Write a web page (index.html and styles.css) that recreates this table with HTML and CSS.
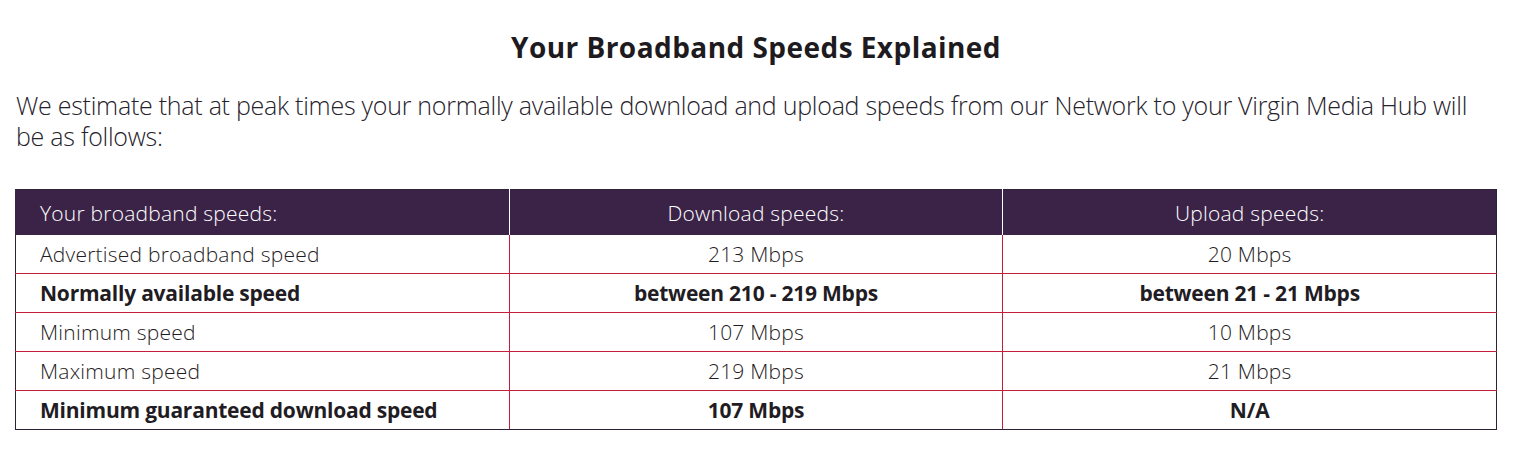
FILE: index.html
```html
<!DOCTYPE html>
<html lang="en">
<head>
<meta charset="utf-8">
<title>Your Broadband Speeds Explained</title>
<link rel="stylesheet" href="styles.css">
</head>
<body>
<main class="page">
  <h2 class="title">Your Broadband Speeds Explained</h2>
  <p class="intro">We estimate that at peak times your normally available download and upload speeds from our Network to your Virgin Media Hub will be as follows:</p>
  <table class="speeds">
    <thead>
      <tr>
        <th class="label">Your broadband speeds:</th>
        <th>Download speeds:</th>
        <th>Upload speeds:</th>
      </tr>
    </thead>
    <tbody>
      <tr>
        <td class="label">Advertised broadband speed</td>
        <td>213 Mbps</td>
        <td>20 Mbps</td>
      </tr>
      <tr class="strong">
        <td class="label">Normally available speed</td>
        <td>between 210 - 219 Mbps</td>
        <td>between 21 - 21 Mbps</td>
      </tr>
      <tr>
        <td class="label">Minimum speed</td>
        <td>107 Mbps</td>
        <td>10 Mbps</td>
      </tr>
      <tr>
        <td class="label">Maximum speed</td>
        <td>219 Mbps</td>
        <td>21 Mbps</td>
      </tr>
      <tr class="strong">
        <td class="label">Minimum guaranteed download speed</td>
        <td>107 Mbps</td>
        <td>N/A</td>
      </tr>
    </tbody>
  </table>
</main>
</body>
</html>
```

FILE: styles.css
```css
html, body {
  margin: 0;
  padding: 0;
  background: #ffffff;
}

body {
  font-family: "Open Sans", Lato, sans-serif;
  color: #231f26;
}

.page {
  width: 1482px;
  padding: 29px 0 0 15px;
}

.title {
  margin: 0;
  font-size: 28px;
  line-height: 36px;
  font-weight: 700;
  text-align: center;
  color: #1d1a20;
  letter-spacing: 0.45px;
}

.intro {
  margin: 25px 0 0 1px;
  font-size: 25px;
  line-height: 31px;
  font-weight: 300;
  letter-spacing: -0.26px;
  color: #26222b;
  padding-right: 4px;
}

.speeds {
  margin-top: 37px;
  width: 1482px;
  border-collapse: collapse;
  table-layout: fixed;
  border: 1px solid #2e2336;
}

.speeds th,
.speeds td {
  width: 33.33%;
  text-align: center;
  font-size: 21px;
  font-weight: 300;
  letter-spacing: 0.22px;
  padding: 0 24px;
}

.speeds th {
  height: 45px;
  background: #3b2348;
  color: #ffffff;
  border-left: 1px solid #ffffff;
}

.speeds th:first-child {
  border-left: 1px solid #3b2348;
}

.speeds td {
  height: 38px;
  color: #1f1c23;
  border: 1px solid #c41e3a;
}

.speeds tr td:first-child {
  border-left: 1px solid #2e2336;
}

.speeds tr td:last-child {
  border-right: 1px solid #2e2336;
}

.speeds tbody tr:last-child td {
  border-bottom: 1px solid #2e2336;
}

.speeds tbody tr:first-child td {
  border-top: none;
}

.speeds .label {
  text-align: left;
}

.speeds .strong td {
  font-weight: 700;
  letter-spacing: -0.22px;
}
```
